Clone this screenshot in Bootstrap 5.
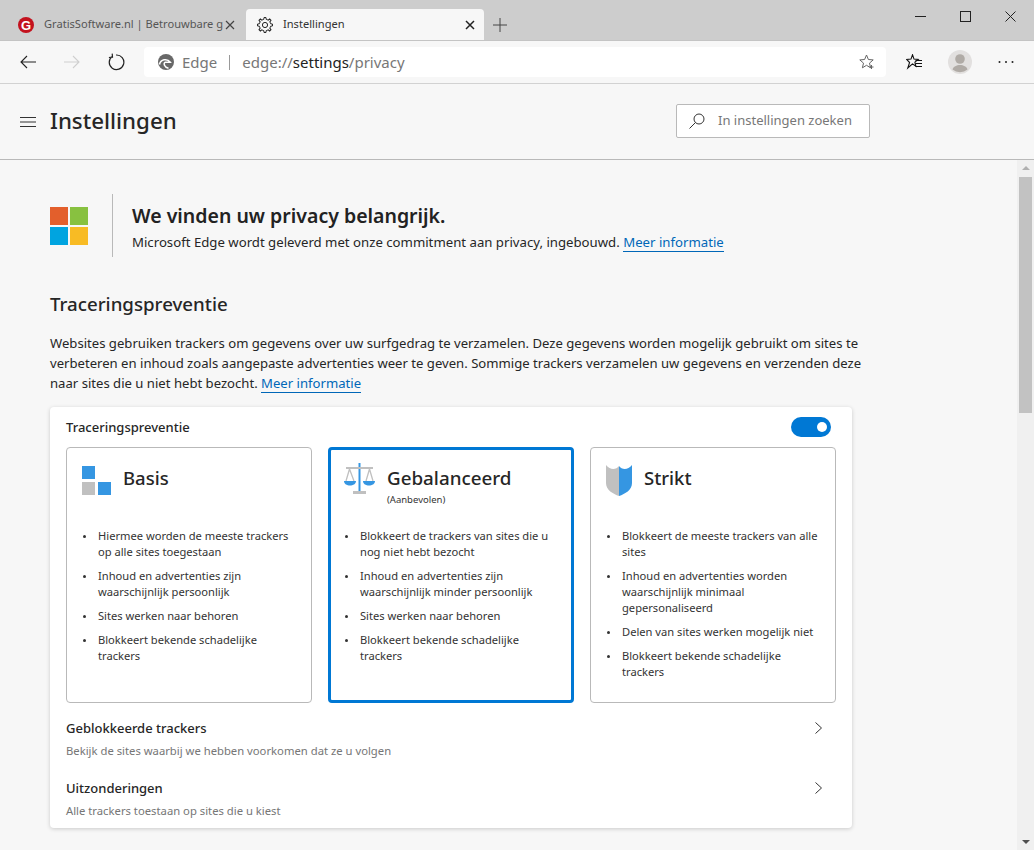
<!DOCTYPE html>
<html lang="nl"><head><meta charset="utf-8"><title>Instellingen</title>
<link href="https://cdn.jsdelivr.net/npm/bootstrap@5.3.0/dist/css/bootstrap.min.css" rel="stylesheet">
<style>
html,body{height:850px;overflow:hidden}
body{font-family:"Noto Sans","Liberation Sans",sans-serif;background:#f7f7f7;color:#262626;font-size:14px;width:1034px}
svg{display:block;flex:none}
.tabstrip{height:41px;background:#cdcdcd;padding-top:9px;border-bottom:1px solid #c4c4c4}
.tabitem{width:246px;height:31px;font-size:11.1px;padding-left:18px;flex:none}
.tabitem.on{background:#f7f7f7;border-radius:4px 4px 0 0;width:238px;padding-left:11px}
.tabtext{white-space:nowrap;width:173px;color:#555;margin-left:10px;margin-right:8px;flex:none}
.on .tabtext{color:#333;margin-right:0;width:182px}
.favtext{font-family:"Liberation Sans",sans-serif;font-size:13px;font-weight:700;fill:#fff}
.plusicon{margin:9px 0 0 9px}
.winbtns{margin-left:auto;gap:34px;padding:0 18px 0 0;margin-top:-9px;height:32px}
.toolbar{height:43px;background:#f7f7f7;border-bottom:1px solid #d2d2d2;padding:0 0 0 20px}
.fwdicon{margin-left:28px}
.reloadicon{margin-left:27px}
.addr{width:742px;height:30px;background:#fff;border-radius:4px;font-size:15px;padding:0 11px 0 14px;margin-left:19px;color:#777}
.addr b{font-weight:400;color:#222}
.addrsep{width:1px;height:15px;background:#999;margin:0 12px 0 12px}
.favicon{margin-left:20px}
.profileicon{margin-left:25px}
.dotsicon{margin-left:26px}
.pagehead{height:76px;border-bottom:1px solid #b9b9b9;padding-left:20px}
.pagetitle{font-size:22.3px;font-weight:500;margin:0 0 0 14px;color:#262626;width:626px}
.searchbox{width:194px;height:34px;background:#fff;border:1px solid #b9b9b9;border-radius:2px;color:#777;font-size:13px;padding:1px 0 0 12px;gap:13px;margin-bottom:2px}
.mainarea{height:690px}
.scrollpane{flex:1 1 auto;padding:34px 0 0 50px;min-width:0}
.sbar{width:17px;background:#f0f0f0;flex:none;padding-top:17px;position:relative}
.sthumb{height:236px;background:#c2c2c2;margin:0 2px}
.sarrow{position:absolute;left:5px;width:0;height:0;border-left:4px solid transparent;border-right:4px solid transparent}
.sarrow.up{top:6px;border-bottom:4px solid #b0b0b0}
.sarrow.down{bottom:6px;border-top:4px solid #505050}
.promo{height:63px}
.promodiv{width:1px;height:63px;background:#b9b9b9;margin:0 19px 0 24px}
.promocopy{padding-top:4px}
.promohead{font-size:19.5px;font-weight:600;line-height:26px;color:#222;margin:0}
.promotext{font-size:13.19px;line-height:20px;white-space:nowrap;margin-top:3px}
.morelink{color:#0067b8;border-bottom:1px solid #0067b8;text-decoration:none}
.sectitle{font-size:18.7px;font-weight:500;line-height:26px;margin:34px 0 16px}
.secdesc{font-size:13.12px;line-height:20px;white-space:nowrap;margin:0 0 14px}
.maincard{width:802px;height:421px;background:#fff;border-radius:4px;box-shadow:0 1px 4px rgba(0,0,0,.18);padding:0 16px}
.cardhead{height:40px;font-size:13px;font-weight:500;color:#262626}
.cardlabel{padding-top:2px}
.switchy{width:40px;height:20px;border-radius:10px;background:#0078d4;margin-left:auto;margin-right:5px;padding-right:4px}
.switchy i{display:block;width:10px;height:10px;border-radius:50%;background:#fff}
.levelrow{gap:16px}
.levelbox{width:246px;height:256px;border:1px solid #b9b9b9;border-radius:4px;padding:15px 15px 0}
.levelbox.sel{border:3px solid #0078d4;padding:13px 13px 0}
.levelname{font-size:18.5px;font-weight:500;line-height:30px;color:#262626}
.levelname.wide{font-size:18.8px}
.levelsub{font-size:9.5px;line-height:12px;color:#333;margin-top:1px}
.leveltop{height:65px;gap:12px}
.iconbasis{margin-top:3px}
.iconshield{margin-top:2px}
.levellist{margin:0;padding:0 0 0 16px;font-size:11.15px;line-height:16px;color:#333;list-style:none}
.levellist li{margin-bottom:8px;position:relative;white-space:nowrap}
.levellist li::before{content:"";position:absolute;left:-15px;top:7px;width:3px;height:3px;border-radius:50%;background:#333}
.linkrow{height:60px;padding:15px 14px 0 0}
.linkname{font-size:13px;font-weight:500;line-height:20px;color:#262626}
.linkhint{font-size:11.27px;line-height:16px;color:#767676;margin-top:5px}
.chev{margin-top:4px}
</style></head><body>
<div class="tabstrip d-flex">
 <div class="tabitem d-flex align-items-center">
  <svg width="16" height="16" viewBox="0 0 16 16"><circle cx="8" cy="8" r="8" fill="#c3121e"/><text x="8" y="12.700" text-anchor="middle" class="favtext">G</text></svg>
  <span class="tabtext">GratisSoftware.nl | Betrouwbare g</span>
  <svg width="10" height="10" viewBox="0 0 10 10"><path d="M1 1l8 8M9 1L1 9" stroke="#444" stroke-width="1.2"/></svg>
 </div>
 <div class="tabitem on d-flex align-items-center">
  <svg width="16" height="16" viewBox="0 0 16 16" fill="none" stroke="#222" stroke-width="1"><defs><path id="tooth" d="M5.780 2.640 6.800 2.330 7.060.5H8.940L9.200 2.330 10.220 2.640"/></defs><use href="#tooth"/><use href="#tooth" transform="rotate(45 8 8)"/><use href="#tooth" transform="rotate(90 8 8)"/><use href="#tooth" transform="rotate(135 8 8)"/><use href="#tooth" transform="rotate(180 8 8)"/><use href="#tooth" transform="rotate(225 8 8)"/><use href="#tooth" transform="rotate(270 8 8)"/><use href="#tooth" transform="rotate(315 8 8)"/><circle cx="8" cy="8" r="2.600"/></svg>
  <span class="tabtext">Instellingen</span>
  <svg width="10" height="10" viewBox="0 0 10 10"><path d="M1 1l8 8M9 1L1 9" stroke="#222" stroke-width="1.500"/></svg>
 </div>
 <svg width="14" height="14" viewBox="0 0 14 14" class="plusicon"><path d="M7 0v14M0 7h14" stroke="#444"/></svg>
 <div class="winbtns d-flex align-items-center">
  <svg width="11" height="11" viewBox="0 0 11 11"><path d="M0 5.500h11" stroke="#222"/></svg>
  <svg width="11" height="11" viewBox="0 0 11 11"><rect x=".5" y=".5" width="10" height="10" fill="none" stroke="#222"/></svg>
  <svg width="11" height="11" viewBox="0 0 11 11"><path d="M.5.500l10 10M10.500.500l-10 10" stroke="#222"/></svg>
 </div>
</div>
<div class="toolbar d-flex align-items-center">
 <svg width="16" height="14" viewBox="0 0 16 14" fill="none" stroke="#222" stroke-width="1.100"><path d="M16 7H1M7 1 1 7l6 6"/></svg>
 <svg width="16" height="14" viewBox="0 0 16 14" fill="none" stroke="#cfcfcf" stroke-width="1.100" class="fwdicon"><path d="M0 7h15M9 1l6 6-6 6"/></svg>
 <svg width="18" height="18" viewBox="0 0 18 18" fill="none" stroke="#222" stroke-width="1.200" class="reloadicon"><path d="M5.500 3.200A7.300 7.300 0 1 0 9 2M5.200 .6l.3 3.600-3.600.3"/></svg>
 <div class="addr d-flex align-items-center">
  <svg width="16" height="16" viewBox="0 0 16 16"><circle cx="8" cy="8" r="8" fill="#686868"/><path d="M1.500 10.500C2.500 5.500 9 3.800 12.300 8.200H7.300C5.300 9.300 6 13.300 10.500 14.200" fill="none" stroke="#fff" stroke-width="1.500"/></svg>
  <span class="ms-2">Edge</span><span class="addrsep"></span>
  <span>edge://<b>settings</b>/privacy</span>
  <svg width="16" height="16" viewBox="0 0 16 16" fill="none" stroke="#666" class="ms-auto"><path d="M7.500 1l1.900 4.500 4.800.4-3.700 3.200 1.100 4.700-4.100-2.500-4.100 2.500 1.100-4.700L.8 5.900l4.800-.4z"/><path d="M12.500 11v4M10.500 13h4"/></svg>
 </div>
 <svg width="17" height="17" viewBox="0 0 17 17" fill="none" stroke="#111" stroke-width="1.100" class="favicon"><path d="M6.500 .8 8 5.100l4.200.3-3.300 2.700 1 4.200-3.400-2.400L1.800 14 3.600 8.500.6 5.400l4.400-.3z"/><path d="M9.500 6.500h6.500M9.500 9.500h6.500M9.500 12.500h6.500"/></svg>
 <svg width="24" height="24" viewBox="0 0 24 24" class="profileicon"><circle cx="12" cy="12" r="12" fill="#e2e0df"/><circle cx="12" cy="9" r="4.800" fill="#b0aba6"/><path d="M4.500 19.500c1.500-6 13.500-6 15 0a12 12 0 0 1-15 0z" fill="#b0aba6"/></svg>
 <svg width="16" height="4" viewBox="0 0 16 4" class="dotsicon"><g fill="#222"><circle cx="1.500" cy="2" r="1"/><circle cx="8" cy="2" r="1"/><circle cx="14.500" cy="2" r="1"/></g></svg>
</div>
<div class="pagehead d-flex align-items-center">
 <svg width="16" height="12" viewBox="0 0 16 12"><path d="M0 1.500h16M0 6h16M0 10.500h16" stroke="#333"/></svg>
 <h1 class="pagetitle">Instellingen</h1>
 <div class="searchbox d-flex align-items-center">
  <svg width="16" height="16" viewBox="0 0 16 16" fill="none" stroke="#333"><circle cx="10" cy="6" r="5"/><path d="M6.500 9.500.5 15.500"/></svg>
  <span>In instellingen zoeken</span>
 </div>
</div>
<div class="mainarea d-flex">
 <div class="scrollpane">
  <div class="promo d-flex align-items-center">
   <svg width="38" height="38" viewBox="0 0 38 38"><rect width="18" height="18" fill="#e35f2c"/><rect x="20" width="18" height="18" fill="#88c140"/><rect y="20" width="18" height="18" fill="#00a4e0"/><rect x="20" y="20" width="18" height="18" fill="#f8bb24"/></svg>
   <div class="promodiv"></div>
   <div class="promocopy"><h2 class="promohead">We vinden uw privacy belangrijk.</h2>
   <div class="promotext">Microsoft Edge wordt geleverd met onze commitment aan privacy, ingebouwd. <a class="morelink" href="#">Meer informatie</a></div></div>
  </div>
  <h2 class="sectitle">Traceringspreventie</h2>
  <p class="secdesc">Websites gebruiken trackers om gegevens over uw surfgedrag te verzamelen. Deze gegevens worden mogelijk gebruikt om sites te<br>verbeteren en inhoud zoals aangepaste advertenties weer te geven. Sommige trackers verzamelen uw gegevens en verzenden deze<br>naar sites die u niet hebt bezocht. <a class="morelink" href="#">Meer informatie</a></p>
  <div class="maincard">
   <div class="cardhead d-flex align-items-center"><span class="cardlabel">Traceringspreventie</span><span class="switchy d-flex align-items-center justify-content-end"><i></i></span></div>
   <div class="levelrow d-flex">
    <div class="levelbox">
     <div class="leveltop d-flex">
      <svg width="29" height="29" viewBox="0 0 29 29" class="iconbasis"><rect width="13" height="13" fill="#3596e2"/><rect y="16" width="13" height="13" fill="#c0c0c0"/><rect x="16" y="16" width="13" height="13" fill="#3596e2"/></svg>
      <div class="levelname">Basis</div>
     </div>
     <ul class="levellist">
      <li>Hiermee worden de meeste trackers<br>op alle sites toegestaan</li>
      <li>Inhoud en advertenties zijn<br>waarschijnlijk persoonlijk</li>
      <li>Sites werken naar behoren</li>
      <li>Blokkeert bekende schadelijke<br>trackers</li>
     </ul>
    </div>
    <div class="levelbox sel">
     <div class="leveltop d-flex">
      <svg width="31" height="32" viewBox="0 0 31 32"><path d="M14.500 0h2v28h-2z" fill="#3596e2"/><path d="M2 4h27v2H2zM9 28h13v3H9z" fill="#c0c0c0"/><path d="M5.500 6 2 18M5.500 6 10 18M25.500 6 22 18M25.500 6 29 18" stroke="#c0c0c0" stroke-width="1.300" fill="none"/><path d="M0 18h12c0 6-12 6-12 0zM19 18h12c0 6-12 6-12 0z" fill="#3596e2"/></svg>
      <div><div class="levelname wide">Gebalanceerd</div><div class="levelsub">(Aanbevolen)</div></div>
     </div>
     <ul class="levellist">
      <li>Blokkeert de trackers van sites die u<br>nog niet hebt bezocht</li>
      <li>Inhoud en advertenties zijn<br>waarschijnlijk minder persoonlijk</li>
      <li>Sites werken naar behoren</li>
      <li>Blokkeert bekende schadelijke<br>trackers</li>
     </ul>
    </div>
    <div class="levelbox">
     <div class="leveltop d-flex">
      <svg width="26" height="31" viewBox="0 0 26 31" class="iconshield"><path d="M13 1C10 5 4 5 0 0V18C0 25 7 29 13 31Z" fill="#c0c0c0"/><path d="M13 1C16 5 22 5 26 0V18C26 25 19 29 13 31Z" fill="#3596e2"/></svg>
      <div class="levelname">Strikt</div>
     </div>
     <ul class="levellist">
      <li>Blokkeert de meeste trackers van alle<br>sites</li>
      <li>Inhoud en advertenties worden<br>waarschijnlijk minimaal<br>gepersonaliseerd</li>
      <li>Delen van sites werken mogelijk niet</li>
      <li>Blokkeert bekende schadelijke<br>trackers</li>
     </ul>
    </div>
   </div>
   <div class="linkrow d-flex align-items-start justify-content-between">
    <div><div class="linkname">Geblokkeerde trackers</div><div class="linkhint">Bekijk de sites waarbij we hebben voorkomen dat ze u volgen</div></div>
    <svg width="7" height="12" viewBox="0 0 7 12" fill="none" stroke="#333" class="chev"><path d="M.5.500l6 5.500-6 5.500"/></svg>
   </div>
   <div class="linkrow d-flex align-items-start justify-content-between">
    <div><div class="linkname">Uitzonderingen</div><div class="linkhint">Alle trackers toestaan op sites die u kiest</div></div>
    <svg width="7" height="12" viewBox="0 0 7 12" fill="none" stroke="#333" class="chev"><path d="M.5.500l6 5.500-6 5.500"/></svg>
   </div>
  </div>
 </div>
 <div class="sbar"><span class="sarrow up"></span><div class="sthumb"></div><span class="sarrow down"></span></div>
</div>
</body></html>
